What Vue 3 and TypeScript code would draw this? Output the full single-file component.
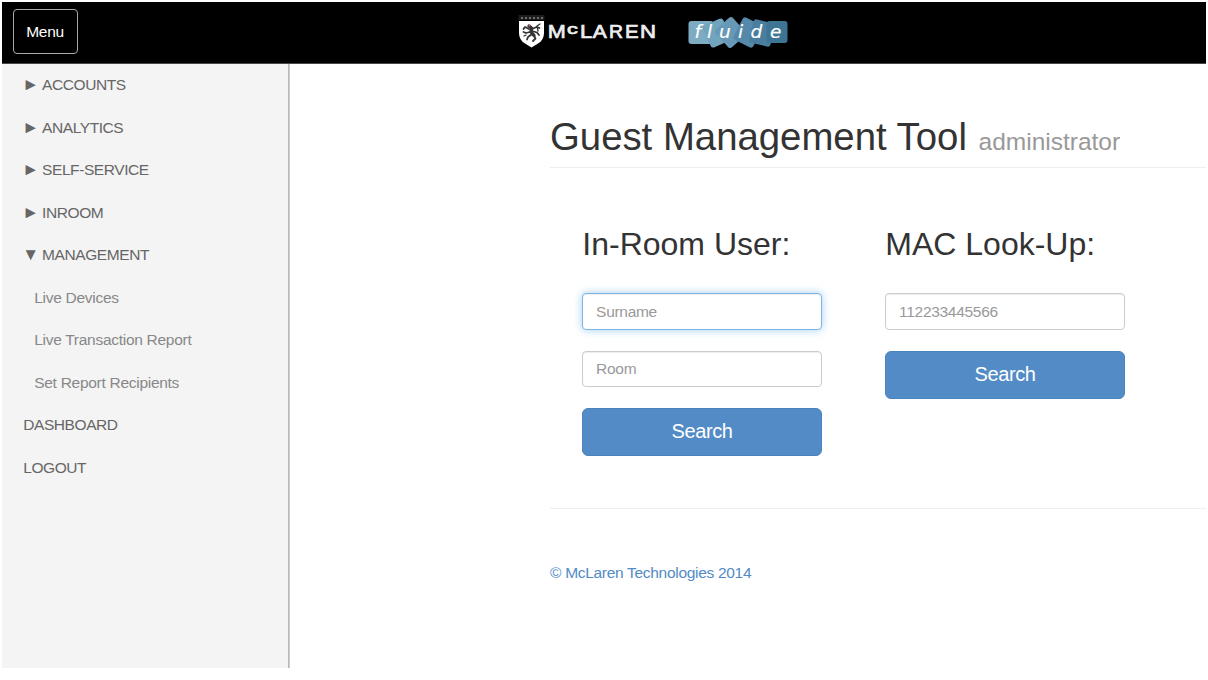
<script setup lang="ts">
import { ref } from 'vue'

interface MenuItem {
  label: string
  arrow?: string
  child?: boolean
}

const items: MenuItem[] = [
  { label: 'ACCOUNTS', arrow: '►' },
  { label: 'ANALYTICS', arrow: '►' },
  { label: 'SELF-SERVICE', arrow: '►' },
  { label: 'INROOM', arrow: '►' },
  { label: 'MANAGEMENT', arrow: '▼' },
  { label: 'Live Devices', child: true },
  { label: 'Live Transaction Report', child: true },
  { label: 'Set Report Recipients', child: true },
  { label: 'DASHBOARD' },
  { label: 'LOGOUT' },
]

const surname = ref('')
const room = ref('')
const mac = ref('')
</script>

<template>
  <div class="page">
    <header class="navbar">
      <button class="menu-btn" type="button">Menu</button>
      <svg class="logo-mclaren" width="140" height="36" viewBox="0 0 140 36">
        <rect x="0.5" y="2" width="26" height="5" fill="#1c1c1c" />
        <path d="M3 5H25" stroke="#8a8a8a" stroke-width="1.4" stroke-dasharray="2 2" />
        <path d="M1 8H26V20Q26 27 20 30.500L13.5 34.500L7 30.500Q1 27 1 20Z" fill="#fff" />
        <g fill="none" stroke="#333" stroke-linecap="round" stroke-linejoin="round" transform="translate(0 1)">
          <path d="M11 12L13.5 14L13 18L16 21.5" stroke-width="3.4" />
          <path d="M14 15L18.500 13L21.500 14M14 17L19 18.500L21 21M11 15L7 13L5.5 15M12 18L8 19L5.5 18M14 20L10 23L9 25.500M16 22L17.500 24.500L15 27" stroke-width="1.8" />
          <path d="M20 17L19 12L22 10M8 21L6 22" stroke-width="1.3" />
        </g>
        <circle cx="11.5" cy="12.4" r="1" fill="#c0605c" />
        <g class="wordmark">
          <text x="29.700" y="25" textLength="18" lengthAdjust="spacingAndGlyphs">M</text>
          <text class="small-cap" x="49" y="21" textLength="10.800" lengthAdjust="spacingAndGlyphs">c</text>
          <text x="61.900" y="25" textLength="12.300" lengthAdjust="spacingAndGlyphs">L</text>
          <text x="74.700" y="25" textLength="14" lengthAdjust="spacingAndGlyphs">A</text>
          <text x="91.100" y="25" textLength="14" lengthAdjust="spacingAndGlyphs">R</text>
          <text x="107" y="25" textLength="13.600" lengthAdjust="spacingAndGlyphs">E</text>
          <text x="122" y="25" textLength="16" lengthAdjust="spacingAndGlyphs">N</text>
        </g>
      </svg>
      <svg class="logo-fluide" width="102" height="38" viewBox="0 0 102 38">
        <rect x="1.5" y="7" width="25" height="23" rx="3" fill="#7dabc1" />
        <rect x="19" y="7" width="22" height="24" rx="3" fill="#72a4bd" transform="rotate(-24 30 19)" />
        <rect x="32" y="6.500" width="23" height="24" rx="3" fill="#6799b7" transform="rotate(-42 43.500 18.500)" />
        <rect x="50" y="6" width="22" height="25" rx="3" fill="#5588a9" transform="rotate(27 61 18.500)" />
        <rect x="64" y="7" width="22" height="24" rx="3" fill="#4a7e9f" transform="rotate(14 75 19)" />
        <rect x="79.500" y="7" width="21" height="22" rx="3" fill="#3e7595" />
        <g class="fluide">
          <text x="7.500" y="24">f</text>
          <text x="20" y="24">l</text>
          <text x="32" y="24">u</text>
          <text x="51" y="24">i</text>
          <text x="63.500" y="24">d</text>
          <text x="83" y="24">e</text>
        </g>
      </svg>
    </header>

    <div class="body">
      <nav class="sidebar">
        <a v-for="item in items" :key="item.label" class="item" :class="{ child: item.child }">
          <span v-if="item.arrow" class="arrow">{{ item.arrow }}</span>{{ item.label }}
        </a>
      </nav>

      <main class="content">
        <h1>Guest Management Tool <small>administrator</small></h1>
        <div class="columns">
          <form class="column" @submit.prevent>
            <h2>In-Room User:</h2>
            <input v-model="surname" class="field active" placeholder="Surname" />
            <input v-model="room" class="field" placeholder="Room" />
            <button class="search" type="submit">Search</button>
          </form>
          <form class="column" @submit.prevent>
            <h2>MAC Look-Up:</h2>
            <input v-model="mac" class="field" placeholder="112233445566" />
            <button class="search" type="submit">Search</button>
          </form>
        </div>
        <footer><a>© McLaren Technologies 2014</a></footer>
      </main>
    </div>
  </div>
</template>

<style>
body {
  margin: 0;
  background: #fff;
}
</style>

<style scoped>
.page,
.page * {
  box-sizing: border-box;
}
.page {
  width: 1208px;
  height: 680px;
  padding: 2px 2px 12px;
  display: flex;
  flex-direction: column;
  overflow: hidden;
  font-family: 'Liberation Sans', Arial, sans-serif;
  font-size: 15.500px;
  letter-spacing: -0.300px;
  color: #333;
}
.navbar {
  flex: none;
  display: flex;
  align-items: flex-start;
  height: 62px;
  padding-left: 10.500px;
  background: #000;
  border-bottom: 1px solid #484848;
}
.menu-btn {
  flex: none;
  width: 65px;
  height: 45px;
  margin-top: 7px;
  padding: 0;
  font: inherit;
  letter-spacing: inherit;
  color: #fff;
  background: #000;
  border: 1px solid #aaa;
  border-radius: 4px;
}
.logo-mclaren {
  flex: none;
  margin: 11px 0 0 440.500px;
  letter-spacing: 0;
}
.logo-fluide {
  flex: none;
  margin: 12px 0 0 29px;
  letter-spacing: 0;
}
.wordmark {
  fill: #eee;
  stroke: #eee;
  stroke-width: 0.700px;
  font-family: 'Liberation Sans', Arial, sans-serif;
  font-size: 18px;
}
.wordmark .small-cap {
  font-size: 15.500px;
}
.fluide {
  fill: #fff;
  stroke: #fff;
  stroke-width: 0.200px;
  font-family: 'DejaVu Sans', sans-serif;
  font-style: italic;
  font-size: 18.500px;
}
.body {
  flex: 1;
  display: flex;
  min-height: 0;
}
.sidebar {
  flex: none;
  width: 288px;
  background: #f4f4f4;
  border-right: 1px solid #ccc;
  box-shadow: inset -1px 0 #b8b8b8;
}
.item {
  display: block;
  height: 42.550px;
  padding-left: 21.200px;
  line-height: 42.550px;
  letter-spacing: -0.420px;
  color: #666;
}
.item.child {
  padding-left: 32.200px;
  letter-spacing: -0.280px;
  color: #888;
}
.arrow {
  display: inline-block;
  width: 18.900px;
  font-size: 17px;
  line-height: 20px;
  text-indent: -1px;
}
.content {
  flex: 1;
  min-width: 0;
  padding: 48px 0 0 260px;
}
h1,
h2 {
  margin: 0;
  font-weight: 500;
  letter-spacing: 0;
}
h1 {
  height: 56px;
  font-size: 38.350px;
  line-height: 50px;
  border-bottom: 1px solid #eee;
  white-space: nowrap;
}
small {
  margin-left: 1px;
  font-size: 24.500px;
  font-weight: 400;
  color: #999;
}
.columns {
  display: flex;
  gap: 63.500px;
  height: 341px;
  padding: 55px 0 0 32.300px;
  border-bottom: 1px solid #eee;
}
.column {
  width: 239.500px;
}
h2 {
  height: 70px;
  font-size: 32px;
  line-height: 42px;
}
.field {
  display: block;
  width: 100%;
  height: 36.500px;
  margin-bottom: 21px;
  padding: 1px 12.800px 0;
  font: inherit;
  letter-spacing: inherit;
  color: #555;
  background: #fff;
  border: 1px solid #ccc;
  border-radius: 4px;
  outline: none;
  box-shadow: inset 0 1px 1px rgba(0, 0, 0, 0.075);
}
.field::placeholder {
  color: #999;
  opacity: 1;
}
.field.active {
  border-color: #7fb5e6;
  box-shadow: inset 0 1px 1px rgba(0, 0, 0, 0.075), 0 0 8px rgba(102, 175, 233, 0.6);
}
.search {
  display: block;
  width: 100%;
  height: 48px;
  padding: 0 0 1px;
  font: inherit;
  font-size: 20px;
  letter-spacing: -0.400px;
  color: #fff;
  background: #528bc5;
  border: 1px solid #4a83bf;
  border-radius: 6px;
}
footer {
  padding-top: 55px;
  color: #528bc5;
}
</style>
